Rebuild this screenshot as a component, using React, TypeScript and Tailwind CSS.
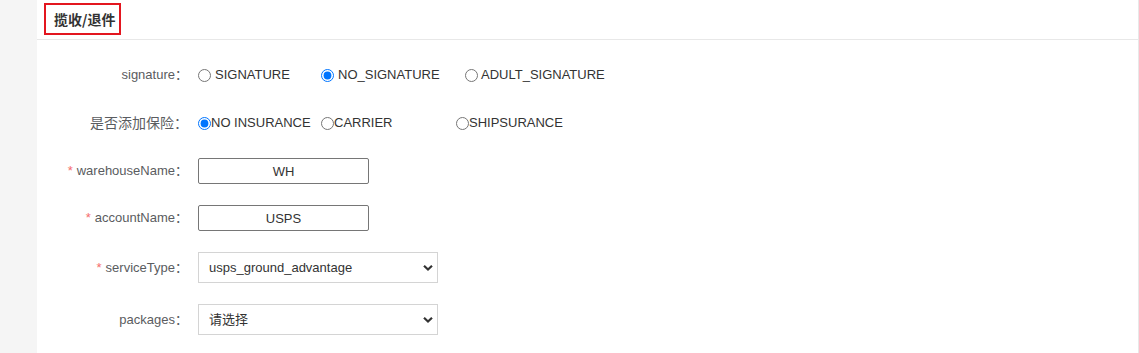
import React from "react";

const font = { fontFamily: '"Liberation Sans", Arial, "Noto Sans CJK SC", sans-serif' };

function Label({ text, required, size }: { text: string; required?: boolean; size?: string }) {
  return (
    <div className={`w-[151px] shrink-0 text-right ${size ?? "text-[13px]"} text-[#5a5c60] whitespace-nowrap`}>
      {required && <span className="text-[#f56c6c] mr-[4px]">*</span>}
      {text}：
    </div>
  );
}

function Radio({ label, checked, width, gap, name }: { label: string; checked?: boolean; width?: string; gap: string; name: string }) {
  return (
    <label className={`flex items-center shrink-0 ${width ?? ""}`}>
      <input type="radio" name={name} defaultChecked={checked} className="m-0 w-[13px] h-[13px]" />
      <span className={`text-[13px] text-[#333] whitespace-nowrap ${gap}`}>{label}</span>
    </label>
  );
}

function Chevron() {
  return (
    <svg className="pointer-events-none absolute right-[5px] top-1/2 -translate-y-1/2" width="10" height="7" viewBox="0 0 10 7">
      <path d="M1 1.2 L5 5 L9 1.2" fill="none" stroke="#333" strokeWidth="2.2" />
    </svg>
  );
}

function Select({ value }: { value: string }) {
  return (
    <div className="relative w-[240px] h-[31px]">
      <select
        defaultValue={value}
        className="appearance-none w-full h-full border border-[#d4d4d4] bg-white pl-[10px] pr-[24px] text-[13px] text-[#333] outline-none"
        style={font}
      >
        <option value={value}>{value}</option>
      </select>
      <Chevron />
    </div>
  );
}

export default function App() {
  return (
    <div className="flex w-[1139px] h-[353px] bg-[#f5f5f5] overflow-hidden" style={font}>
      <div className="w-[37px] shrink-0" />
      <div className="flex-1 bg-white border-r border-[#e8e8e8] flex flex-col">
        <div className="h-[40px] border-b border-[#e8e8e8] pl-[7px] pt-[3px]">
          <div className="w-[77px] h-[32px] border-2 border-[#e3161f] flex items-center pl-[8px]">
            <span className="text-[14px] font-bold text-[#333] whitespace-nowrap" style={{ fontFamily: '"Noto Sans CJK SC", sans-serif' }}>
              揽收/退件
            </span>
          </div>
        </div>

        <div className="flex items-center h-[32px] mt-[19px]">
          <Label text="signature" />
          <div className="flex items-center ml-[10px]">
            <Radio name="sig" label="SIGNATURE" width="w-[123px]" gap="ml-[4px]" />
            <Radio name="sig" label="NO_SIGNATURE" checked width="w-[144px]" gap="ml-[4px]" />
            <Radio name="sig" label="ADULT_SIGNATURE" gap="ml-[3px]" />
          </div>
        </div>

        <div className="flex items-center h-[32px] mt-[16px]">
          <Label text="是否添加保险" size="text-[14px]" />
          <div className="flex items-center ml-[10px]">
            <Radio name="ins" label="NO INSURANCE" checked width="w-[123px]" gap="ml-0" />
            <Radio name="ins" label="CARRIER" width="w-[135px]" gap="ml-0" />
            <Radio name="ins" label="SHIPSURANCE" gap="ml-0" />
          </div>
        </div>

        <div className="flex items-center h-[32px] mt-[16px]">
          <Label text="warehouseName" required />
          <input
            defaultValue="WH"
            className="ml-[10px] w-[171px] h-[26px] border border-[#767676] rounded-[2px] text-center text-[13px] text-[#333] outline-none"
            style={font}
          />
        </div>

        <div className="flex items-center h-[32px] mt-[15px]">
          <Label text="accountName" required />
          <input
            defaultValue="USPS"
            className="ml-[10px] w-[171px] h-[26px] border border-[#767676] rounded-[2px] text-center text-[13px] text-[#333] outline-none"
            style={font}
          />
        </div>

        <div className="flex items-center h-[31px] mt-[18px]">
          <Label text="serviceType" required />
          <div className="ml-[10px]">
            <Select value="usps_ground_advantage" />
          </div>
        </div>

        <div className="flex items-center h-[31px] mt-[21px]">
          <Label text="packages" />
          <div className="ml-[10px]">
            <Select value="请选择" />
          </div>
        </div>
      </div>
    </div>
  );
}
